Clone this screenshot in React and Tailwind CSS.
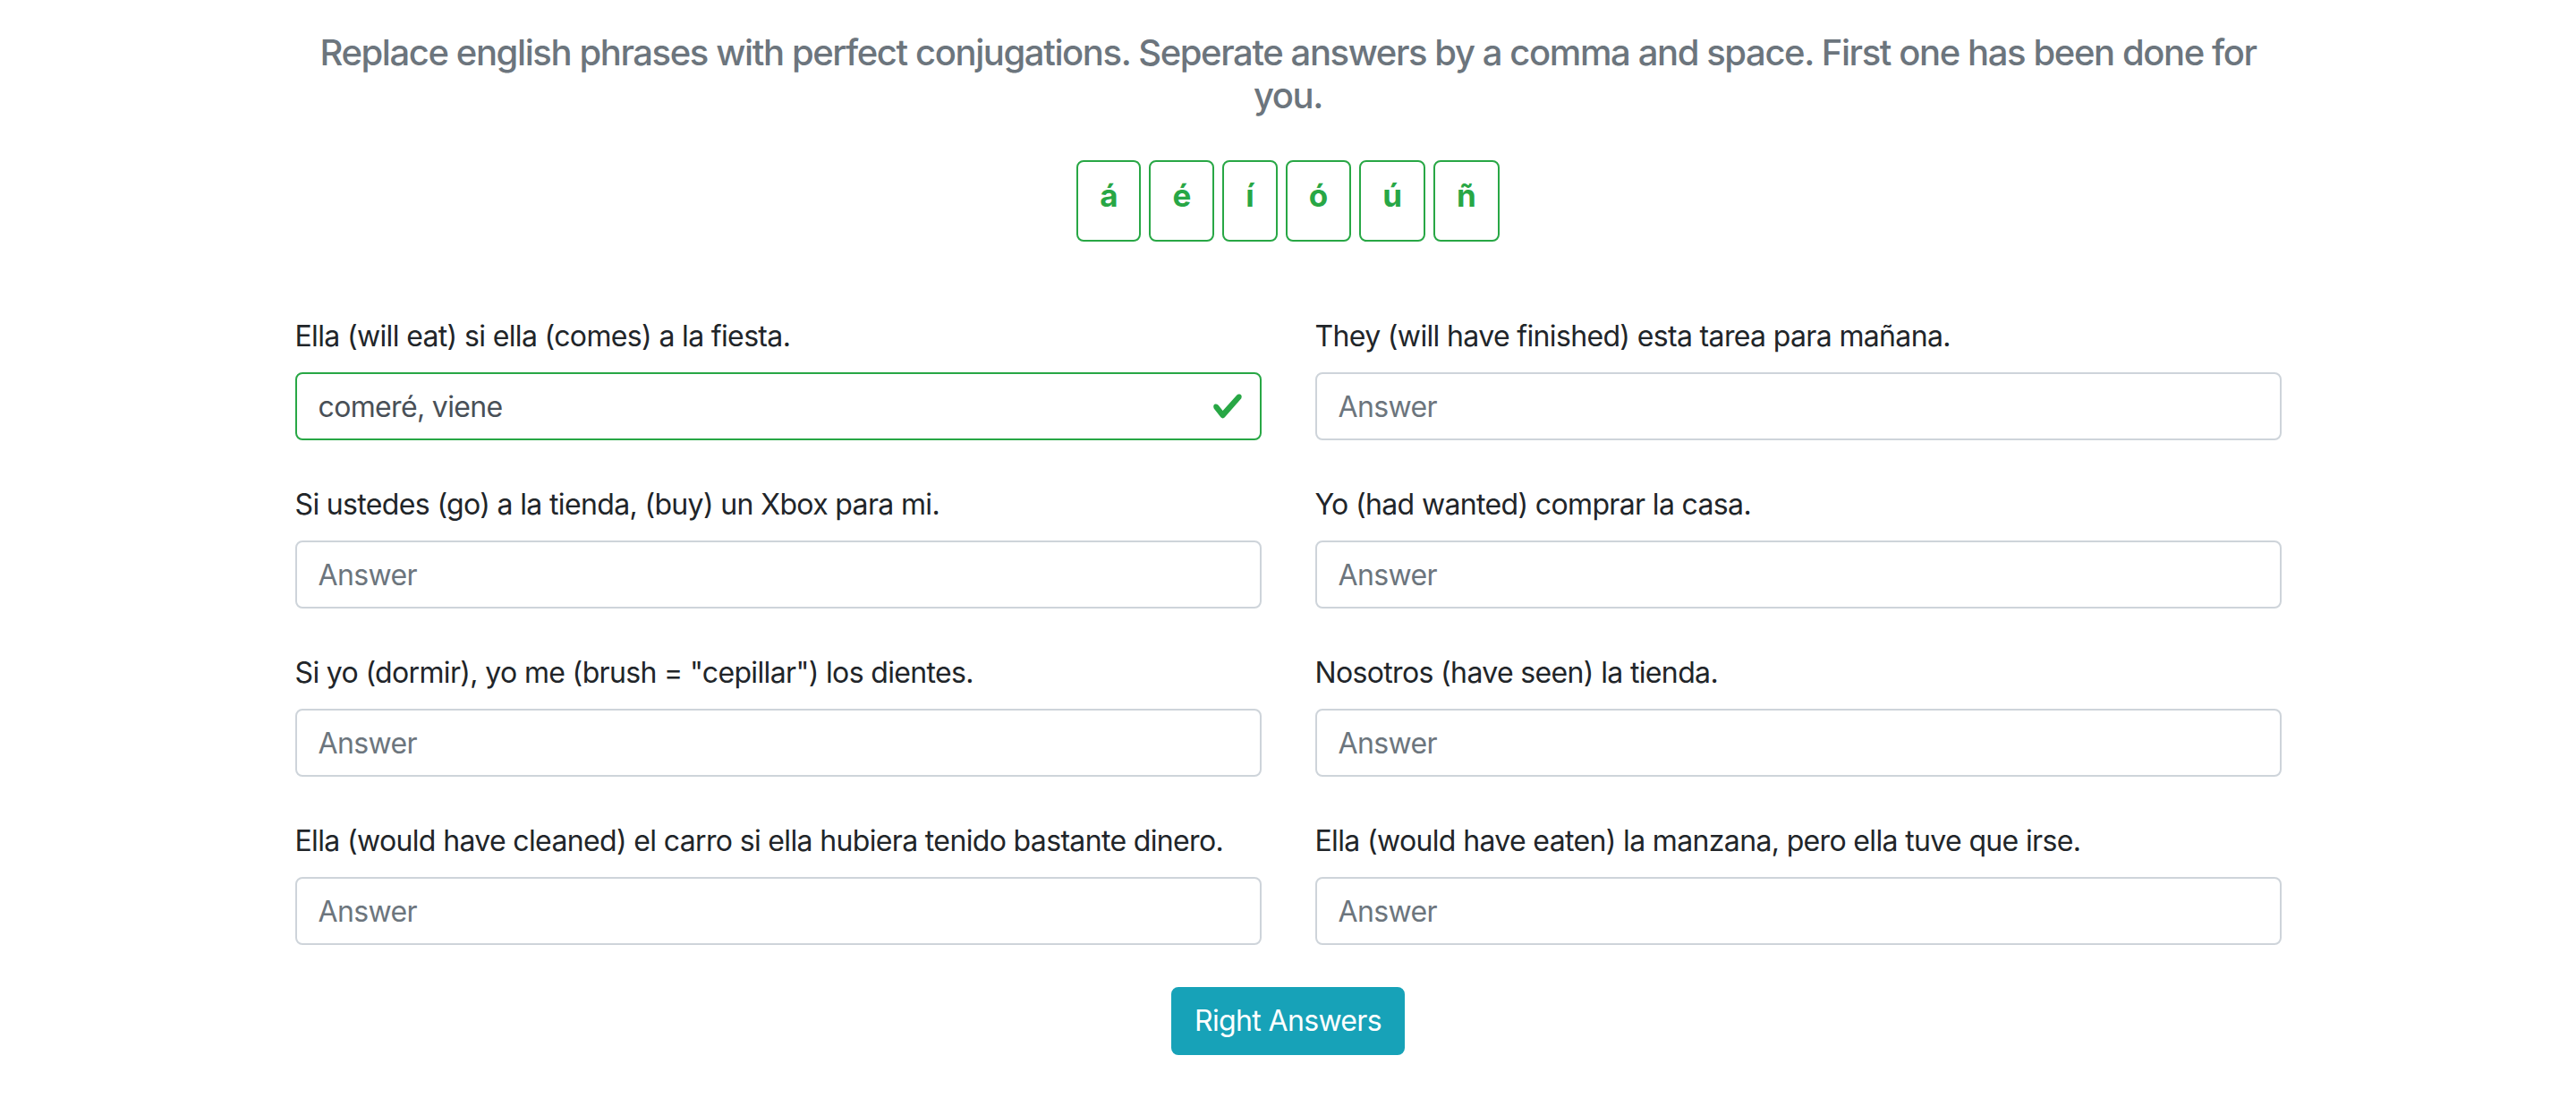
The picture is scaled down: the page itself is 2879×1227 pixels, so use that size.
import React from "react";

const accents = ["á", "é", "í", "ó", "ú", "ñ"];

const questions = [
  { label: "Ella (will eat) si ella (comes) a la fiesta.", value: "comeré, viene", valid: true },
  { label: "They (will have finished) esta tarea para mañana." },
  { label: "Si ustedes (go) a la tienda, (buy) un Xbox para mi." },
  { label: "Yo (had wanted) comprar la casa." },
  { label: 'Si yo (dormir), yo me (brush = "cepillar") los dientes.' },
  { label: "Nosotros (have seen) la tienda." },
  { label: "Ella (would have cleaned) el carro si ella hubiera tenido bastante dinero." },
  { label: "Ella (would have eaten) la manzana, pero ella tuve que irse." },
];

const font = { fontFamily: "Inter, 'Liberation Sans', sans-serif" };

const App = () => {
  return (
    <div className="min-h-screen bg-white text-[#212529] tracking-[-0.65px]" style={font}>
      <div className="w-[2220px] mx-auto pt-[35px]">
        <h5 className="text-center text-[40px] leading-[48px] font-medium text-[#6c757d] tracking-[-1.4px]">
          Replace english phrases with perfect conjugations. Seperate answers by a comma and space. First one has been done for you.
        </h5>

        {/* accent buttons */}
        <div className="flex justify-center gap-[9px] mt-[48px]">
          {accents.map((a) => (
            <button
              key={a}
              className="h-[91px] px-[24px] pt-[13px] border-2 border-[#28a745] rounded-[8px] text-[#28a745] text-[35px] leading-[48px] font-bold tracking-normal flex items-start justify-center"
            >
              {a}
            </button>
          ))}
        </div>

        {/* questions */}
        <div className="grid grid-cols-2 gap-x-[60px] mt-[82px]">
          {questions.map((q, index) => (
            <div key={index} className="mb-[48px]">
              <label className="block text-[32px] leading-[48px] mb-[16px] text-[#212529] whitespace-nowrap">{q.label}</label>
              <div className="relative">
                <input
                  readOnly
                  defaultValue={q.value || ""}
                  placeholder="Answer"
                  className={`block w-full h-[76px] px-[24px] text-[32px] rounded-[8px] border-2 bg-white text-[#495057] placeholder:text-[#6c757d] outline-none tracking-[-0.65px] ${
                    q.valid ? "border-[#28a745]" : "border-[#ced4da]"
                  }`}
                />
                {q.valid && (
                  <svg
                    className="absolute right-[20px] top-[20px] w-[36px] h-[36px]"
                    viewBox="0 0 8 8"
                  >
                    <path
                      fill="#28a745"
                      d="M2.3 6.73L.6 4.53c-.4-1.04.46-1.4 1.1-.8l1.1 1.4 3.4-3.8c.6-.63 1.6-.27 1.2.7l-4 4.6c-.43.5-.8.4-1.1.1z"
                    />
                  </svg>
                )}
              </div>
            </div>
          ))}
        </div>

        <div className="flex justify-center -mt-[1px]">
          <button className="h-[76px] px-[24px] rounded-[8px] bg-[#17a2b8] border-2 border-[#17a2b8] text-white text-[32px] leading-[48px]">
            Right Answers
          </button>
        </div>
      </div>
    </div>
  );
};

export default App;
